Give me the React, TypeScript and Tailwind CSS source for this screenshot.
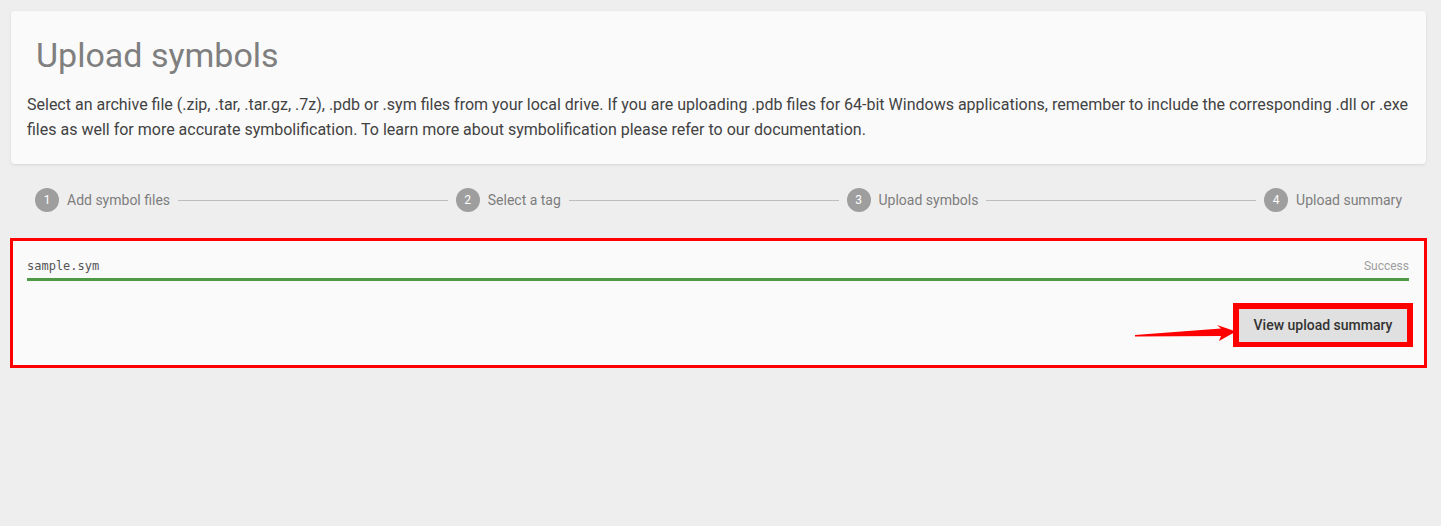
const steps = ['Add symbol files', 'Select a tag', 'Upload symbols', 'Upload summary'];

function Stepper() {
  return (
    <div className="flex items-center p-6">
      {steps.map((label, i) => (
        <div key={label} className="contents">
          <div className="flex items-center">
            <span className="flex h-6 w-6 items-center justify-center rounded-full bg-[#9e9e9e] text-[12px] text-white">
              {i + 1}
            </span>
            <span className="ml-2 text-[14px] text-[#7d7d7d]">{label}</span>
          </div>
          {i < steps.length - 1 && <div className="mx-2 flex-1 border-t border-[#bdbdbd]" />}
        </div>
      ))}
    </div>
  );
}

function ArrowMark() {
  return (
    <svg
      className="absolute right-full top-[15px] mr-[3px]"
      width="101"
      height="18"
      viewBox="0 0 101 18"
    >
      <polygon points="0,11 0,12.5 86,12 84,17 101,7.5 82,1 86,4.5" fill="#ff0000" />
    </svg>
  );
}

export default function App() {
  return (
    <div className="min-h-screen bg-[#eeeeee] pl-[11px] pr-[15px] pt-[11px] font-['Roboto',sans-serif]">
      <div className="rounded-[4px] bg-[#fafafa] px-4 pb-[22px] pt-6 shadow-[0_1px_3px_rgba(0,0,0,0.1)]">
        <h1 className="ml-[9px] text-[34px] font-normal leading-[40px] text-[#7f7f7f]">Upload symbols</h1>
        <p className="mt-[17px] text-[16px] leading-[25px] text-[#424242]">
          Select an archive file (.zip, .tar, .tar.gz, .7z), .pdb or .sym files from your local drive. If you are
          uploading .pdb files for 64-bit Windows applications, remember to include the corresponding .dll or .exe
          files as well for more accurate symbolification. To learn more about symbolification please refer to our
          documentation.
        </p>
      </div>

      <Stepper />

      <div className="ml-[-1px] mr-[-1px] mt-[2px] border-[3px] border-[#ff0000] bg-[#fafafa] pb-[18px] pl-[14px] pr-[15px] pt-[17px]">
        <div className="flex items-end justify-between">
          <span className="font-['DejaVu_Sans_Mono',monospace] text-[12px] leading-4 text-[#555555]">sample.sym</span>
          <span className="text-[12px] leading-4 text-[#9e9e9e]">Success</span>
        </div>
        <div className="mt-1 h-[3px] bg-[#4e9a47]" />
        <div className="mt-[22px] flex justify-end">
          <div className="relative mr-[-4px] border-[6px] border-b-[5px] border-[#ff0000]">
            <ArrowMark />
            <button className="flex h-[33px] w-[168px] items-center justify-center bg-[#e0e0e0] text-[14px] font-medium text-[#333333]">
              View upload summary
            </button>
          </div>
        </div>
      </div>
    </div>
  );
}
